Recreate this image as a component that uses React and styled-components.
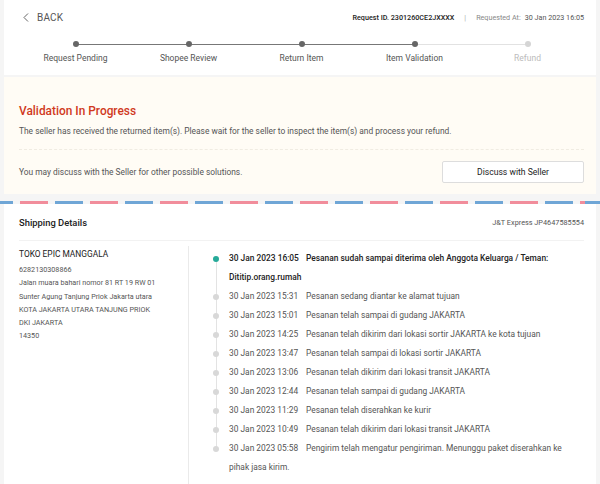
import React from "react";
import styled, { createGlobalStyle } from "styled-components";

const GlobalStyle = createGlobalStyle`
  body {
    margin: 0;
    background: #f5f5f5;
    font-family: Roboto, "Liberation Sans", Arial, sans-serif;
    color: #222;
  }
`;

const Page = styled.div`
  padding: 0 4px;
  display: flex;
  flex-direction: column;
`;

const HeaderCard = styled.div`
  background: #fff;
  height: 75px;
  padding: 0 12px 0 15px;
  box-sizing: border-box;
`;

const TopBar = styled.div`
  height: 34px;
  display: flex;
  align-items: center;
  justify-content: space-between;
`;

const BackLink = styled.div`
  display: flex;
  align-items: center;
  gap: 8px;
  padding-left: 4px;
  font-size: 10px;
  color: #555;
  letter-spacing: 0.2px;
`;

const RequestInfo = styled.div`
  display: flex;
  align-items: center;
  font-size: 7.2px;
  color: #888;
`;

const RequestId = styled.span`
  color: #222;
  font-weight: 500;
`;

const Divider = styled.span`
  margin: 0 10px;
  color: #aaa;
`;

const Dim = styled.span`
  color: ${(p) => p.$color || "#888"};
  margin-left: ${(p) => p.$ml || 0}px;
`;

const Stepper = styled.div`
  display: grid;
  grid-template-columns: repeat(5, 113px);
`;

const Step = styled.div`
  position: relative;
  display: flex;
  flex-direction: column;
  align-items: center;
  padding-top: 7px;
  font-size: 8.5px;
  color: ${(p) => (p.$done ? "#555" : "#bbb")};

  &::after {
    content: "";
    display: ${(p) => (p.$last ? "none" : "block")};
    position: absolute;
    top: 9.5px;
    left: 56.5px;
    width: 113px;
    height: 1px;
    background: ${(p) => (p.$lineDone ? "#777" : "#e2e2e2")};
  }
`;

const StepDot = styled.span`
  width: 6px;
  height: 6px;
  border-radius: 50%;
  background: ${(p) => (p.$done ? "#666" : "#d5d5d5")};
  position: relative;
  z-index: 1;
  margin-bottom: 6px;
`;

const StatusCard = styled.div`
  margin-top: 2px;
  background: #fffcf5;
  padding: 26px 12px 11px 15px;
`;

const StatusTitle = styled.div`
  font-size: 11.9px;
  line-height: 16px;
  font-weight: 500;
  color: #d0391d;
`;

const StatusText = styled.div`
  margin-top: 6px;
  font-size: 8.4px;
  line-height: 12px;
  color: #555;
  padding-bottom: 12px;
  border-bottom: 1px dashed #f0ece2;
`;

const DiscussRow = styled.div`
  display: flex;
  align-items: center;
  justify-content: space-between;
  margin-top: 11px;
  font-size: 8.4px;
  color: #555;
`;

const DiscussButton = styled.button`
  width: 142px;
  height: 22px;
  background: #fff;
  border: 1px solid #ddd;
  border-radius: 2px;
  font-family: inherit;
  font-size: 8.6px;
  color: #222;
  padding: 0;
`;

const Stripe = styled.div`
  margin: 7px -4px 0;
  height: 3px;
  background-image: repeating-linear-gradient(
    90deg,
    #6fa6d6 0 28px,
    transparent 28px 35px,
    #f18d9b 35px 63px,
    transparent 63px 70px
  );
  background-position: -15px 0;
`;

const ShippingCard = styled.div`
  background: #fff;
  padding: 0 12px 0 15px;
  height: 290px;
`;

const ShippingHead = styled.div`
  height: 36px;
  display: flex;
  align-items: center;
  justify-content: space-between;
  border-bottom: 1px solid #f2f2f2;
`;

const ShippingTitle = styled.div`
  font-size: 9.4px;
  font-weight: 500;
  color: #222;
`;

const Courier = styled.div`
  font-size: 7.3px;
  color: #555;
`;

const ShippingBody = styled.div`
  display: flex;
  padding-top: 5px;
`;

const Address = styled.div`
  width: 169px;
  flex-shrink: 0;
  border-right: 1px solid #eaeaea;
  min-height: 250px;
  padding-top: 2px;
`;

const AddressName = styled.div`
  font-size: 8.4px;
  line-height: 13px;
  color: #222;
  margin-bottom: 2px;
`;

const AddressLine = styled.div`
  font-size: 7.2px;
  line-height: 13.3px;
  color: #555;
`;

const Timeline = styled.div`
  flex: 1;
  padding: 3px 4px 0 17px;
`;

const Event = styled.div`
  position: relative;
  padding-left: 23px;
  font-size: 8.4px;
  line-height: 19px;
  color: ${(p) => (p.$current ? "#222" : "#555")};
  font-weight: ${(p) => (p.$current ? 500 : 400)};

  &::before {
    content: "";
    position: absolute;
    left: 7px;
    top: 6.5px;
    width: 6px;
    height: 6px;
    border-radius: 50%;
    background: ${(p) => (p.$current ? "#26aa99" : "#d8d8d8")};
    z-index: 1;
  }

  &::after {
    content: "";
    display: ${(p) => (p.$last ? "none" : "block")};
    position: absolute;
    left: 9.5px;
    top: 9.5px;
    bottom: -9.5px;
    width: 1px;
    background: #e3e3e3;
  }
`;

const EventTime = styled.span`
  display: inline-block;
  width: 77px;
`;

const steps = [
  { label: "Request Pending", done: true },
  { label: "Shopee Review", done: true },
  { label: "Return Item", done: true },
  { label: "Item Validation", done: true },
  { label: "Refund", done: false },
];

const events = [
  ["30 Jan 2023 16:05", "Pesanan sudah sampai diterima oleh Anggota Keluarga / Teman: Dititip.orang.rumah"],
  ["30 Jan 2023 15:31", "Pesanan sedang diantar ke alamat tujuan"],
  ["30 Jan 2023 15:01", "Pesanan telah sampai di gudang JAKARTA"],
  ["30 Jan 2023 14:25", "Pesanan telah dikirim dari lokasi sortir JAKARTA ke kota tujuan"],
  ["30 Jan 2023 13:47", "Pesanan telah sampai di lokasi sortir JAKARTA"],
  ["30 Jan 2023 13:06", "Pesanan telah dikirim dari lokasi transit JAKARTA"],
  ["30 Jan 2023 12:44", "Pesanan telah sampai di gudang JAKARTA"],
  ["30 Jan 2023 11:29", "Pesanan telah diserahkan ke kurir"],
  ["30 Jan 2023 10:49", "Pesanan telah dikirim dari lokasi transit JAKARTA"],
  ["30 Jan 2023 05:58", "Pengirim telah mengatur pengiriman. Menunggu paket diserahkan ke pihak jasa kirim."],
];

const addressLines = [
  "6282130308866",
  "Jalan muara bahari nomor 81 RT 19 RW 01",
  "Sunter Agung Tanjung Priok Jakarta utara",
  "KOTA JAKARTA UTARA TANJUNG PRIOK",
  "DKI JAKARTA",
  "14350",
];

export default function App() {
  return (
    <Page>
      <GlobalStyle />
      <HeaderCard>
        <TopBar>
          <BackLink>
            <svg width="6" height="9" viewBox="0 0 6 9">
              <path d="M5 0.5 L1 4.5 L5 8.5" fill="none" stroke="#666" strokeWidth="1" />
            </svg>
            BACK
          </BackLink>
          <RequestInfo>
            <RequestId>Request ID. 2301260CE2JXXXX</RequestId>
            <Divider>|</Divider>
            <Dim>Requested At:</Dim>
            <Dim $color="#555" $ml={4}>30 Jan 2023 16:05</Dim>
          </RequestInfo>
        </TopBar>
        <Stepper>
          {steps.map((s, i) => (
            <Step
              key={s.label}
              $done={s.done}
              $last={i === steps.length - 1}
              $lineDone={steps[i + 1] && steps[i + 1].done}
            >
              <StepDot $done={s.done} />
              {s.label}
            </Step>
          ))}
        </Stepper>
      </HeaderCard>

      <StatusCard>
        <StatusTitle>Validation In Progress</StatusTitle>
        <StatusText>
          The seller has received the returned item(s). Please wait for the seller to inspect the item(s) and process your refund.
        </StatusText>
        <DiscussRow>
          You may discuss with the Seller for other possible solutions.
          <DiscussButton>Discuss with Seller</DiscussButton>
        </DiscussRow>
      </StatusCard>

      <Stripe />

      <ShippingCard>
        <ShippingHead>
          <ShippingTitle>Shipping Details</ShippingTitle>
          <Courier>J&amp;T Express JP4647585554</Courier>
        </ShippingHead>
        <ShippingBody>
          <Address>
            <AddressName>TOKO EPIC MANGGALA</AddressName>
            {addressLines.map((l) => (
              <AddressLine key={l}>{l}</AddressLine>
            ))}
          </Address>
          <Timeline>
            {events.map(([time, desc], i) => (
              <Event key={time} $current={i === 0} $last={i === events.length - 1}>
                <EventTime>{time}</EventTime>
                {desc}
              </Event>
            ))}
          </Timeline>
        </ShippingBody>
      </ShippingCard>
    </Page>
  );
}
